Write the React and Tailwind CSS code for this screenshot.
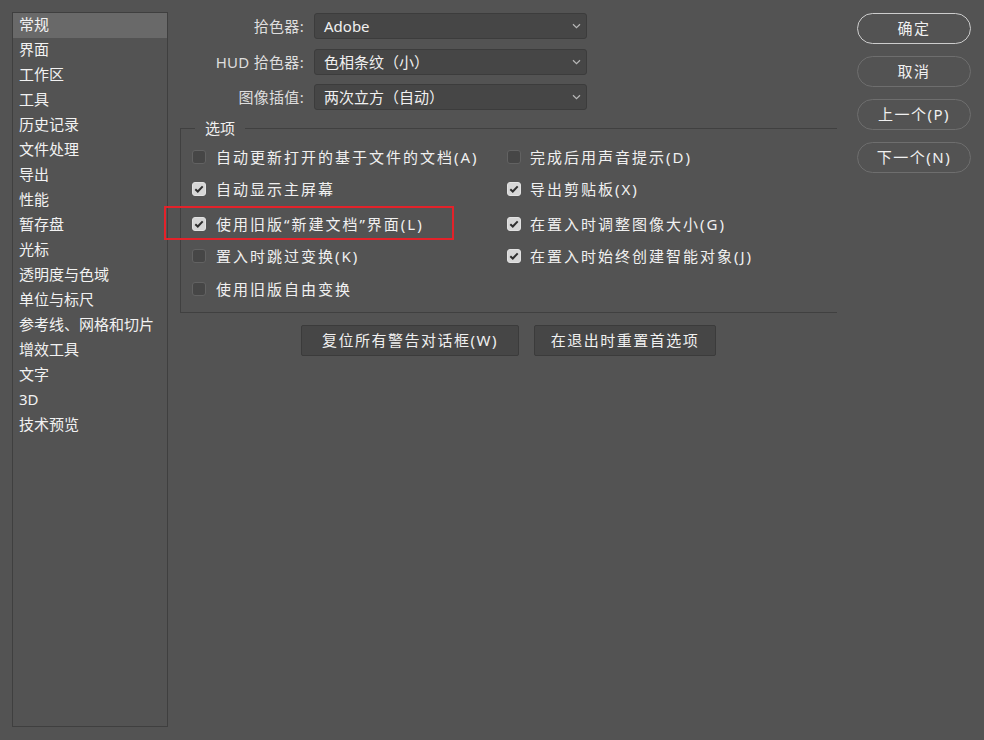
import React from "react";

const font = { fontFamily: '"Noto Sans", "Noto Sans CJK SC", sans-serif' };

const sidebarItems = [
  "常规", "界面", "工作区", "工具", "历史记录", "文件处理", "导出", "性能", "暂存盘", "光标",
  "透明度与色域", "单位与标尺", "参考线、网格和切片", "增效工具", "文字", "3D", "技术预览",
];

function Chevron() {
  return (
    <svg width="9" height="6" viewBox="0 0 9 6" className="shrink-0">
      <path d="M1 1.2 L4.5 4.6 L8 1.2" fill="none" stroke="#b8b8b8" strokeWidth="1.2" />
    </svg>
  );
}

function Select({ label, value }) {
  return (
    <div className="flex items-center h-[26px]">
      <div className="w-[125px] text-right text-[15px] tracking-[0.3px] text-[#dedede] pr-[1px]">{label}</div>
      <div className="ml-[9px] w-[273px] h-[26px] flex items-center justify-between bg-[#464646] border border-[#3c3c3c] rounded-[3px] pl-[9px] pr-[5px]">
        <span className="text-[15px] text-[#f0f0f0] leading-none">{value}</span>
        <Chevron />
      </div>
    </div>
  );
}

function Box({ checked }) {
  if (checked) {
    return (
      <span className="w-[14px] h-[14px] rounded-[3px] bg-[#d6d6d6] border border-[#e2e2e2] flex items-center justify-center shrink-0">
        <svg width="10" height="8" viewBox="0 0 10 8">
          <path d="M1.3 4.2 L3.8 6.5 L8.7 1.4" fill="none" stroke="#2e2e2e" strokeWidth="2" />
        </svg>
      </span>
    );
  }
  return <span className="w-[14px] h-[14px] rounded-[3px] bg-[#464646] border border-[#626262] shrink-0" />;
}

function Check({ checked, label, gap = "ml-[10px]" }) {
  return (
    <div className="flex items-center">
      <Box checked={checked} />
      <span className={`${gap} text-[15px] tracking-[2px] text-[#f0f0f0] whitespace-nowrap leading-none`}>{label}</span>
    </div>
  );
}

function PillButton({ children, primary }) {
  return (
    <button
      className={`h-[31px] w-[114px] rounded-full text-[15px] tracking-[1.5px] text-[#f0f0f0] flex items-center justify-center ${
        primary ? "border-[1.5px] border-[#cdcdcd]" : "border border-[#6e6e6e]"
      }`}
    >
      {children}
    </button>
  );
}

export default function App() {
  return (
    <div style={font} className="w-[984px] h-[740px] bg-[#535353] flex overflow-hidden select-none">
      {/* Sidebar */}
      <div className="ml-[12px] mt-[12px] w-[156px] h-[715px] border border-[#3f3f3f] flex flex-col">
        {sidebarItems.map((it, i) => (
          <div
            key={it}
            className={`h-[25px] flex items-center pl-[6px] pb-[2px] text-[15px] text-[#f2f2f2] ${
              i === 0 ? "bg-[#696969]" : ""
            }`}
          >
            {it}
          </div>
        ))}
      </div>

      {/* Main */}
      <div className="ml-[12px] w-[657px] flex flex-col pt-[13px]">
        <Select label="拾色器:" value="Adobe" />
        <div className="mt-[10px]">
          <Select label="HUD 拾色器:" value="色相条纹（小）" />
        </div>
        <div className="mt-[9px]">
          <Select label="图像插值:" value="两次立方（自动）" />
        </div>

        <fieldset className="mt-[8px] border-t border-l border-b border-r-0 border-[#404040] p-0 m-0 min-w-0">
          <legend className="ml-[14px] px-[10px] text-[15px] leading-[20px] text-[#f0f0f0]">选项</legend>
          <div className="grid grid-cols-[315px_1fr] pl-[11px] pt-[3px] pb-[7px]">
            <div className="h-[32px] flex items-center"><Check label="自动更新打开的基于文件的文档(A)" /></div>
            <div className="h-[32px] flex items-center"><Check label="完成后用声音提示(D)" gap="ml-[9px]" /></div>

            <div className="h-[32px] flex items-center"><Check checked label="自动显示主屏幕" /></div>
            <div className="h-[32px] flex items-center"><Check checked label="导出剪贴板(X)" gap="ml-[9px]" /></div>

            <div className="h-[32px] mt-[3px] flex items-center relative">
              <Check checked label="使用旧版“新建文档”界面(L)" />
              <div className="absolute left-[-28px] top-[-2px] w-[290px] h-[34px] border-2 border-[#e3222a] pointer-events-none" />
            </div>
            <div className="h-[32px] mt-[3px] flex items-center"><Check checked label="在置入时调整图像大小(G)" gap="ml-[9px]" /></div>

            <div className="h-[32px] flex items-center"><Check label="置入时跳过变换(K)" /></div>
            <div className="h-[32px] flex items-center"><Check checked label="在置入时始终创建智能对象(J)" gap="ml-[9px]" /></div>

            <div className="h-[32px] mt-[1px] flex items-center"><Check label="使用旧版自由变换" /></div>
            <div className="h-[32px] mt-[1px]" />
          </div>
        </fieldset>

        <div className="mt-[12px] flex justify-center gap-[15px]">
          <button className="w-[218px] h-[31px] bg-[#464646] border border-[#3b3b3b] rounded-[2px] text-[15px] tracking-[1.5px] text-[#f0f0f0] flex items-center justify-center">
            复位所有警告对话框(W)
          </button>
          <button className="w-[182px] h-[31px] bg-[#464646] border border-[#3b3b3b] rounded-[2px] text-[15px] tracking-[1.5px] text-[#f0f0f0] flex items-center justify-center">
            在退出时重置首选项
          </button>
        </div>
      </div>

      {/* Right buttons */}
      <div className="ml-[20px] pt-[13px] flex flex-col gap-[12px]">
        <PillButton primary>确定</PillButton>
        <PillButton>取消</PillButton>
        <PillButton>上一个(P)</PillButton>
        <PillButton>下一个(N)</PillButton>
      </div>
    </div>
  );
}
